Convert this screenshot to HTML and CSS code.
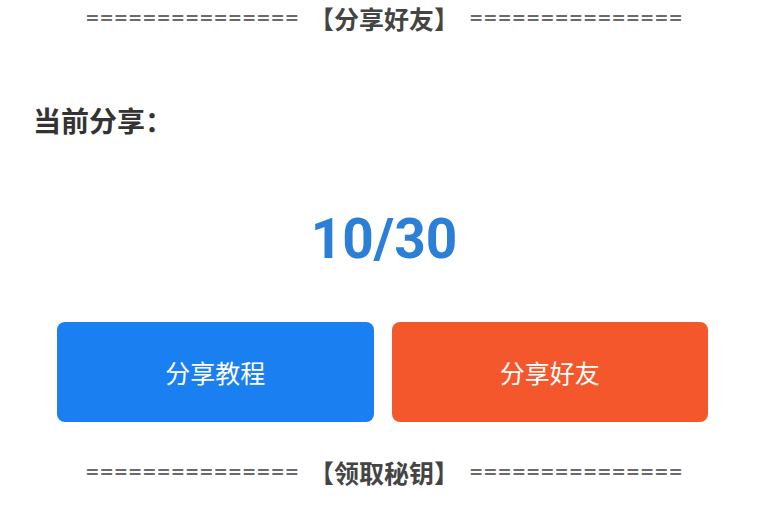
FILE: index.html
```html
<!DOCTYPE html>
<html lang="zh">
<head>
<meta charset="utf-8">
<link rel="stylesheet" href="styles.css">
</head>
<body>
<div class="page">
  <div class="divider top"><span class="eq">===============</span><span class="title">【分享好友】</span><span class="eq">===============</span></div>
  <div class="label">当前分享：</div>
  <div class="count">10/30</div>
  <div class="buttons">
    <div class="btn blue">分享教程</div>
    <div class="btn orange">分享好友</div>
  </div>
  <div class="divider bottom"><span class="eq">===============</span><span class="title">【领取秘钥】</span><span class="eq">===============</span></div>
</div>
</body>
</html>
```
FILE: styles.css
```css
html, body { margin: 0; padding: 0; background: #fff; }
.page {
  width: 768px;
  height: 510px;
  overflow: hidden;
  font-family: "Noto Sans CJK SC", "Noto Sans", sans-serif;
  color: #333;
}
.divider {
  display: flex;
  justify-content: center;
  align-items: center;
  gap: 10px;
  height: 36px;
  font-size: 25px;
  color: #555;
}
.divider .eq {
  font-family: "DejaVu Sans", sans-serif;
  font-size: 17px;
  font-weight: 700;
  color: #6a6a6a;
}
.divider .title { font-weight: 700; color: #444; }
.label {
  margin: 66px 0 0 33px;
  font-size: 28px;
  font-weight: 700;
  line-height: 36px;
  color: #333;
}
.count {
  margin-top: 72px;
  text-align: center;
  font-family: "Roboto", "Noto Sans", sans-serif;
  font-size: 55px;
  font-weight: 700;
  line-height: 58px;
  color: #2b7fd6;
}
.buttons {
  display: flex;
  gap: 18px;
  margin: 54px 60px 0 57px;
}
.btn {
  flex: 1;
  height: 100px;
  border-radius: 8px;
  display: flex;
  align-items: center;
  justify-content: center;
  color: #fff;
  font-size: 25px;
}
.blue { background: #1a7ff0; }
.orange { background: #f5572d; }
.divider.bottom { margin-top: 32px; }
```
